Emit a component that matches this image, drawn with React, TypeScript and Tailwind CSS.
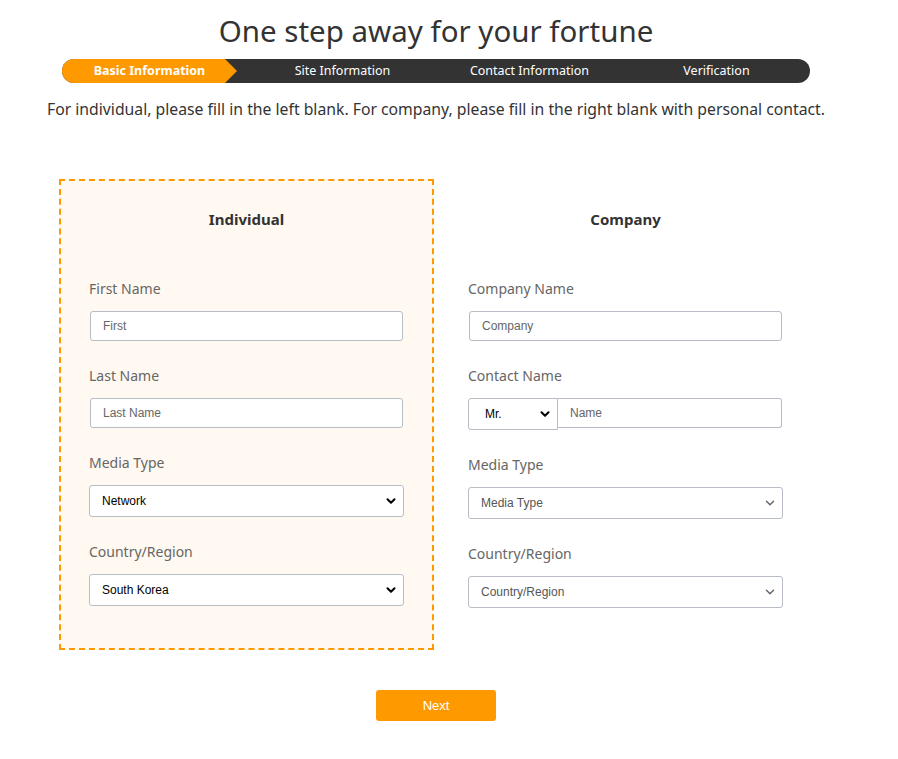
import React from "react";
import { ChevronDown } from "lucide-react";

const steps = ["Basic Information", "Site Information", "Contact Information", "Verification"];

const Label = ({ children, className = "" }: { children: React.ReactNode; className?: string }) => (
  <p className={`text-[14px] leading-5 text-[#666] ${className}`}>{children}</p>
);

const TextInput = ({ placeholder, className = "" }: { placeholder: string; className?: string }) => (
  <input
    placeholder={placeholder}
    className={`h-[30px] bg-white border border-[#b8bcc4] rounded-[3px] px-3 text-[12px] font-['Liberation_Sans',Arial,sans-serif] text-black placeholder:text-[#666] focus:outline-none ${className}`}
  />
);

const Select = ({
  value,
  muted,
  className = "",
}: {
  value: string;
  muted?: boolean;
  className?: string;
}) => (
  <div className={`relative h-8 ${className}`}>
    <select
      defaultValue={value}
      className={`appearance-none w-full h-full bg-white border border-[#b8bcc4] rounded-[3px] pl-3 pr-8 text-[12px] font-['Liberation_Sans',Arial,sans-serif] focus:outline-none ${
        muted ? "text-[#555]" : "text-black"
      }`}
    >
      <option>{value}</option>
    </select>
    <ChevronDown
      size={14}
      strokeWidth={muted ? 2.5 : 3.5}
      className={`absolute right-[6px] top-1/2 -translate-y-1/2 pointer-events-none ${
        muted ? "text-[#666]" : "text-black"
      }`}
    />
  </div>
);

const App = () => {
  return (
    <div className="w-[898px] min-h-[759px] bg-white font-['Noto_Sans','Open_Sans',sans-serif] text-[#333]">
      {/* Heading */}
      <h1 className="pt-[10px] text-center text-[29.5px] leading-[42px] ml-[-26px]">
        One step away for your fortune
      </h1>

      {/* Progress bar */}
      <div className="ml-[62px] mt-[7px] w-[748px] h-6 rounded-full bg-[#333] overflow-hidden grid grid-cols-4">
        {steps.map((s, i) =>
          i === 0 ? (
            <div
              key={s}
              className="w-[175px] h-6 bg-[#f90] flex items-center justify-center text-white text-[12.5px] font-bold [clip-path:polygon(0_0,calc(100%-12px)_0,100%_50%,calc(100%-12px)_100%,0_100%)]"
            >
              {s}
            </div>
          ) : (
            <div key={s} className="h-6 flex items-center justify-center text-white text-[12.5px]">
              {s}
            </div>
          )
        )}
      </div>

      <p className="mt-[14px] ml-[47px] text-[15.75px] leading-6">
        For individual, please fill in the left blank. For company, please fill in the right blank with personal contact.
      </p>

      {/* Forms */}
      <div className="mt-[58px] ml-[59px] flex gap-[5px]">
        {/* Individual */}
        <div className="w-[375px] h-[471px] border-2 border-dashed border-[#f90] bg-[#fff9f1] pt-[26px] px-[28px]">
          <h2 className="text-center text-[15px] leading-6 font-bold">Individual</h2>
          <Label className="mt-[48px]">First Name</Label>
          <TextInput placeholder="First" className="mt-3 ml-px w-[313px]" />
          <Label className="mt-[25px]">Last Name</Label>
          <TextInput placeholder="Last Name" className="mt-3 ml-px w-[313px]" />
          <Label className="mt-[25px]">Media Type</Label>
          <Select value="Network" className="mt-3 w-[315px]" />
          <Label className="mt-[25px]">Country/Region</Label>
          <Select value="South Korea" className="mt-3 w-[315px]" />
        </div>

        {/* Company */}
        <div className="w-[374px] h-[471px] border-2 border-transparent pt-[26px] pl-[27px] pr-[28px]">
          <h2 className="text-center text-[15px] leading-6 font-bold">Company</h2>
          <Label className="mt-[48px]">Company Name</Label>
          <TextInput placeholder="Company" className="mt-3 ml-px w-[313px]" />
          <Label className="mt-[25px]">Contact Name</Label>
          <div className="mt-3 flex items-start">
            <div className="relative w-[90px] h-8">
              <select
                defaultValue="Mr."
                className="appearance-none w-full h-full bg-white border border-[#b8bcc4] rounded-l-[3px] pl-[16px] text-[12px] text-black font-['Liberation_Sans',Arial,sans-serif] focus:outline-none"
              >
                <option>Mr.</option>
                <option>Ms.</option>
              </select>
              <ChevronDown
                size={14}
                strokeWidth={3.5}
                className="absolute right-[6px] top-1/2 -translate-y-1/2 pointer-events-none text-black"
              />
            </div>
            <TextInput placeholder="Name" className="w-[224px] rounded-l-none border-l-0" />
          </div>
          <Label className="mt-[25px]">Media Type</Label>
          <Select value="Media Type" muted className="mt-3 w-[315px]" />
          <Label className="mt-[25px]">Country/Region</Label>
          <Select value="Country/Region" muted className="mt-3 w-[315px]" />
        </div>
      </div>

      <div className="mt-[40px] ml-[376px]">
        <button className="w-[120px] h-[31px] bg-[#f90] rounded-[3px] text-white text-[13px] font-['Liberation_Sans',Arial,sans-serif]">
          Next
        </button>
      </div>
    </div>
  );
};

export default App;
